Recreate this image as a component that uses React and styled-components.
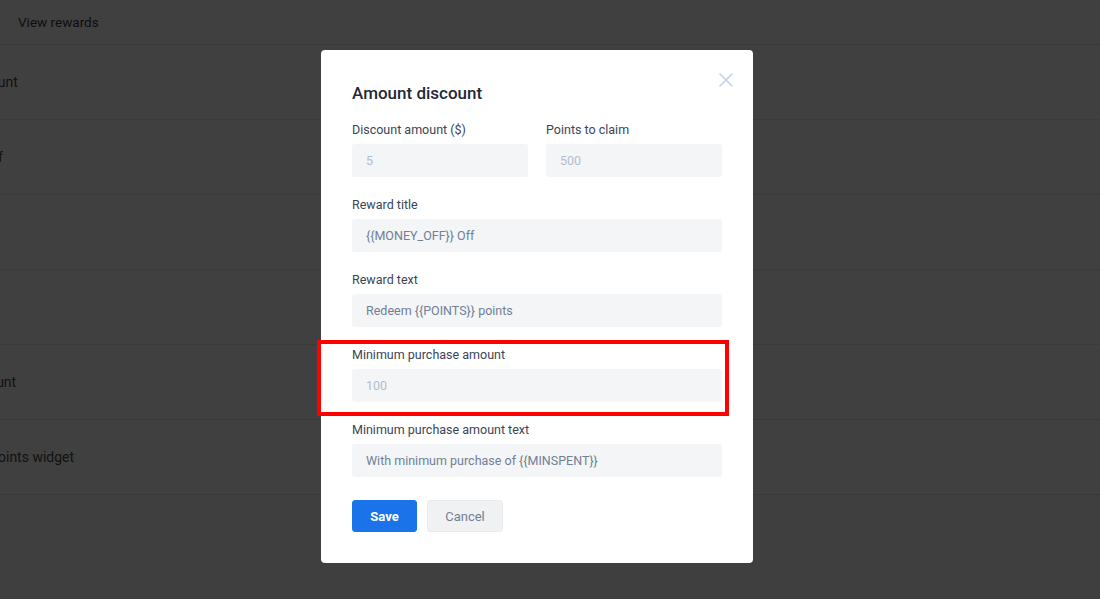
import React from "react";
import styled, { createGlobalStyle } from "styled-components";

const GlobalStyle = createGlobalStyle`
  * { box-sizing: border-box; }
  html, body { margin: 0; padding: 0; }
  body {
    font-family: Roboto, "Liberation Sans", Arial, sans-serif;
    background: #fbfcff;
    overflow: hidden;
  }
`;

const Page = styled.div`
  height: 100vh;
  background: #fbfcff;
`;

const Header = styled.div`
  height: 45px;
  display: flex;
  align-items: center;
  padding-left: 18px;
  background: #ffffff;
  border-bottom: 1px solid #e5e7eb;
  font-size: 13.5px;
  color: #3a3a3a;
`;

const List = styled.div`
  background: #ffffff;
  overflow: hidden;
`;

const ListInner = styled.div`
  margin-left: -89px;
`;

const Row = styled.div`
  height: 75px;
  display: flex;
  align-items: center;
  border-bottom: 1px solid #e5e7eb;
  font-size: 14px;
  color: #4a4a4a;
  white-space: nowrap;
`;

const Overlay = styled.div`
  position: fixed;
  inset: 0;
  background: rgba(0, 0, 0, 0.75);
  display: flex;
  justify-content: center;
  align-items: flex-start;
  padding: 50px 26px 0 0;
`;

const Modal = styled.div`
  position: relative;
  width: 432px;
  background: #ffffff;
  border-radius: 4px;
  padding: 31px 31px 31px 31px;
`;

const CloseButton = styled.button`
  position: absolute;
  top: 22px;
  right: 19px;
  width: 16px;
  height: 16px;
  padding: 0;
  border: none;
  background: transparent;
  display: flex;
  align-items: center;
  justify-content: center;
  cursor: pointer;
`;

const Title = styled.h2`
  margin: 0 0 17px;
  font-size: 17px;
  line-height: 24px;
  font-weight: 500;
  color: #1f2937;
`;

const Form = styled.div`
  display: flex;
  flex-direction: column;
  gap: 20px;
`;

const TwoCols = styled.div`
  display: grid;
  grid-template-columns: 1fr 1fr;
  gap: 18px;
`;

const Field = styled.div`
  position: relative;
  display: flex;
  flex-direction: column;
  gap: 7px;

  ${(p) =>
    p.$highlighted &&
    `
    &::after {
      content: "";
      position: absolute;
      top: -7px;
      bottom: -14px;
      left: -35px;
      right: -7px;
      border: 4px solid #ff0000;
      pointer-events: none;
    }
  `}
`;

const Label = styled.label`
  font-size: 12.5px;
  line-height: 15px;
  font-weight: 400;
  color: #3a4556;
`;

const Input = styled.input`
  height: 33px;
  width: 100%;
  border: none;
  border-radius: 3px;
  background: #f4f5f7;
  padding: 0 14px;
  font-family: Roboto, "Liberation Sans", Arial, sans-serif;
  font-size: 12.5px;
  color: #718096;
  outline: none;

  &::placeholder {
    color: #b4bdcc;
  }
`;

const Actions = styled.div`
  display: flex;
  gap: 10px;
  margin-top: 23px;
`;

const Button = styled.button`
  height: 32px;
  border-radius: 3px;
  font-family: Roboto, "Liberation Sans", Arial, sans-serif;
  font-size: 13px;
  cursor: pointer;
  padding: 0;
  width: ${(p) => (p.$primary ? "65px" : "76px")};
  background: ${(p) => (p.$primary ? "#1a73e8" : "#f0f1f3")};
  color: ${(p) => (p.$primary ? "#ffffff" : "#718096")};
  font-weight: ${(p) => (p.$primary ? 700 : 400)};
  border: 1px solid ${(p) => (p.$primary ? "#1a73e8" : "#e9ebee")};
`;

const rows = [
  "Amount discount",
  "Percentage off",
  "Free shipping",
  "Free product",
  "Percent discount",
  "Display your points widget",
];

const XIcon = () => (
  <svg width="14" height="14" viewBox="0 0 14 14" fill="none">
    <path d="M1 1L13 13M13 1L1 13" stroke="#c2cfef" strokeWidth="1.6" strokeLinecap="round" />
  </svg>
);

export default function App() {
  return (
    <>
      <GlobalStyle />
      <Page>
        <Header>View rewards</Header>
        <List>
          <ListInner>
            {rows.map((r) => (
              <Row key={r}>{r}</Row>
            ))}
          </ListInner>
        </List>
      </Page>
      <Overlay>
        <Modal>
          <CloseButton aria-label="Close">
            <XIcon />
          </CloseButton>
          <Title>Amount discount</Title>
          <Form>
            <TwoCols>
              <Field>
                <Label>Discount amount ($)</Label>
                <Input placeholder="5" />
              </Field>
              <Field>
                <Label>Points to claim</Label>
                <Input placeholder="500" />
              </Field>
            </TwoCols>
            <Field>
              <Label>Reward title</Label>
              <Input readOnly value="{{MONEY_OFF}} Off" />
            </Field>
            <Field>
              <Label>Reward text</Label>
              <Input readOnly value="Redeem {{POINTS}} points" />
            </Field>
            <Field $highlighted>
              <Label>Minimum purchase amount</Label>
              <Input placeholder="100" />
            </Field>
            <Field>
              <Label>Minimum purchase amount text</Label>
              <Input readOnly value="With minimum purchase of {{MINSPENT}}" />
            </Field>
          </Form>
          <Actions>
            <Button $primary>Save</Button>
            <Button>Cancel</Button>
          </Actions>
        </Modal>
      </Overlay>
    </>
  );
}
